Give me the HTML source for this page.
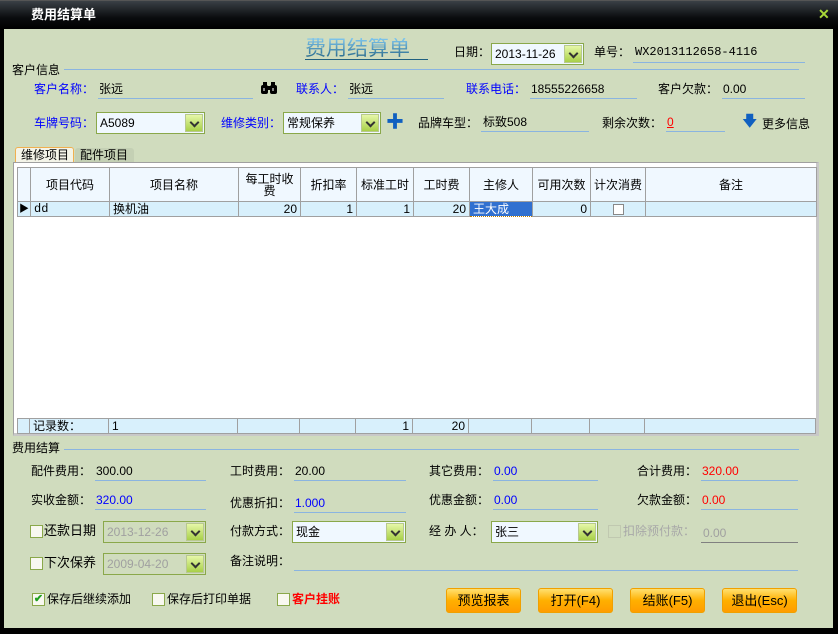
<!DOCTYPE html>
<html><head><meta charset="utf-8"><style>
*{margin:0;padding:0;box-sizing:border-box}
body{width:838px;height:634px;overflow:hidden;background:#000;font-family:"Liberation Sans","Noto Sans CJK SC",sans-serif;font-size:12px;color:#000;position:relative}
.win{position:absolute;left:4px;top:29px;width:829px;height:599px;background:#d0dcbe}
.tb{position:absolute;left:0;top:0;width:838px;height:29px;background:linear-gradient(#3a4046,#0a0c0e 60%,#000);border-top:1px solid #555}
.a{position:absolute;white-space:nowrap;line-height:14px}
.bl{color:#0000ff}
.ul{position:absolute;height:1px;background:#8ab4e0}
.sel{position:absolute;height:22px;border:1px solid #8aa84a;background:#f0f8ff;padding-left:3px;line-height:20px}
.sel i{position:absolute;right:1px;top:1px;width:18px;height:18px;background:linear-gradient(#e6f7a8,#a8d048);border:1px solid #b8c890}
.sel i:after{content:"";position:absolute;left:5px;top:4px;width:5px;height:5px;border-right:2px solid #333;border-bottom:2px solid #333;transform:rotate(45deg)}
.cb{position:absolute;width:13px;height:13px;border:1px solid #8aa84a;background:#f8f8f0}
.btn{position:absolute;top:588px;width:75px;height:25px;border:1px solid #f0a000;border-radius:3px;background:linear-gradient(#ffe070,#ffb000 50%,#ff9c00);text-align:center;line-height:23px;font-size:13px}
table{border-collapse:collapse;position:absolute;left:17px;table-layout:fixed}
td{border:1px solid #a0a0a0;padding:0 3px;overflow:hidden;white-space:nowrap}
</style></head><body>
<div class="tb"></div>
<div class="a" style="left:31px;top:8px;color:#fff;font-weight:bold;font-size:13px">费用结算单</div>
<div class="a" style="left:818px;top:7px;color:#a8d838;font-weight:bold;font-size:14px">✕</div>
<div class="win"></div>

<div class="a" style="left:305px;top:38px;font-size:21px;line-height:22px;background:linear-gradient(#80c8f0,#206080);-webkit-background-clip:text;color:transparent">费用结算单</div>
<div style="position:absolute;left:305px;top:59px;width:123px;height:1px;background:#206080"></div>
<div class="a" style="left:454px;top:45px">日期：</div>
<div class="sel" style="left:491px;top:43px;width:93px">2013-11-26<i></i></div>
<div class="a" style="left:594px;top:45px">单号：</div>
<div class="a" style="left:635px;top:45px;font-family:'Liberation Mono',monospace">WX2013112658-4116</div>
<div class="ul" style="left:633px;top:62px;width:172px"></div>

<div class="a" style="left:12px;top:63px">客户信息</div>
<div class="ul" style="left:64px;top:69px;width:735px"></div>
<div class="a bl" style="left:34px;top:82px">客户名称：</div>
<div class="a" style="left:99px;top:82px">张远</div>
<div class="ul" style="left:98px;top:98px;width:155px"></div>
<svg style="position:absolute;left:261px;top:82px" width="16" height="12" viewBox="0 0 16 12"><rect x="2" y="0" width="4" height="4" fill="#000"/><rect x="10" y="0" width="4" height="4" fill="#000"/><rect x="0" y="3" width="7" height="9" rx="2" fill="#000"/><rect x="9" y="3" width="7" height="9" rx="2" fill="#000"/><rect x="6" y="4" width="4" height="4" fill="#000"/><rect x="2" y="6" width="2" height="3" fill="#888"/><rect x="11" y="6" width="2" height="3" fill="#888"/></svg>
<div class="a bl" style="left:296px;top:82px">联系人：</div>
<div class="a" style="left:349px;top:82px">张远</div>
<div class="ul" style="left:348px;top:98px;width:96px"></div>
<div class="a bl" style="left:466px;top:82px">联系电话：</div>
<div class="a" style="left:531px;top:82px">18555226658</div>
<div class="ul" style="left:530px;top:98px;width:107px"></div>
<div class="a" style="left:658px;top:82px">客户欠款：</div>
<div class="a" style="left:723px;top:82px">0.00</div>
<div class="ul" style="left:722px;top:98px;width:83px"></div>

<div class="a bl" style="left:34px;top:116px">车牌号码：</div>
<div class="sel" style="left:96px;top:112px;width:109px">A5089<i></i></div>
<div class="a bl" style="left:221px;top:116px">维修类别：</div>
<div class="sel" style="left:283px;top:112px;width:98px">常规保养<i></i></div>
<div class="a" style="left:386px;top:112px;color:#1060c0;font-size:18px;font-weight:bold;line-height:20px">✚</div>
<div class="a" style="left:418px;top:116px">品牌车型：</div>
<div class="a" style="left:483px;top:115px">标致508</div>
<div class="ul" style="left:481px;top:131px;width:108px"></div>
<div class="a" style="left:602px;top:116px">剩余次数：</div>
<div class="a" style="left:667px;top:115px;color:red;text-decoration:underline">0</div>
<div class="ul" style="left:666px;top:131px;width:59px"></div>
<div class="a" style="left:742px;top:115px;color:#1060c0;font-size:15px">🡇</div>
<div class="a" style="left:762px;top:117px">更多信息</div>

<div class="a" style="left:15px;top:147px;width:59px;height:16px;background:#f4f4e8;border:1px solid #f0b050;border-bottom:none;border-radius:3px 3px 0 0;padding-left:5px;line-height:15px">维修项目</div>
<div class="a" style="left:75px;top:148px;width:59px;height:15px;background:#c4d0b4;border-radius:3px 3px 0 0;padding-left:5px;line-height:15px">配件项目</div>
<div style="position:absolute;left:13px;top:162px;width:806px;height:274px;border:1px solid #a0a0a0;border-right-width:3px;border-bottom-width:3px;border-color:#a0a0a0 #c8c8c8 #c8c8c8 #a0a0a0;background:#fff"></div>
<table style="top:167px">
<colgroup><col width="12"><col width="79"><col width="129"><col width="62"><col width="56"><col width="57"><col width="56"><col width="63"><col width="58"><col width="55"><col width="171"></colgroup>
<tr style="height:34px;background:#f0f8ff;text-align:center"><td></td><td>项目代码</td><td>项目名称</td><td style="line-height:12px;white-space:normal">每工时收费</td><td>折扣率</td><td>标准工时</td><td>工时费</td><td>主修人</td><td>可用次数</td><td>计次消费</td><td>备注</td></tr>
<tr style="height:15px;background:#d8f0fc;line-height:13px"><td style="padding:0 1px;font-size:10px">▶</td><td style="font-family:'Liberation Mono',monospace">dd</td><td>换机油</td><td style="text-align:right">20</td><td style="text-align:right">1</td><td style="text-align:right">1</td><td style="text-align:right">20</td><td style="background:#3070d0;color:#fff;border:1px dotted #c08000">王大成</td><td style="text-align:right">0</td><td style="text-align:center"><span style="display:inline-block;width:11px;height:11px;border:1px solid #888;background:#fff;vertical-align:middle"></span></td><td></td></tr>
</table>
<table style="top:418px">
<colgroup><col width="12"><col width="79"><col width="129"><col width="62"><col width="56"><col width="57"><col width="56"><col width="63"><col width="58"><col width="55"><col width="171"></colgroup>
<tr style="height:15px;background:#d8f0fc;line-height:13px"><td></td><td>记录数：</td><td>1</td><td></td><td></td><td style="text-align:right">1</td><td style="text-align:right">20</td><td></td><td></td><td></td><td></td></tr>
</table>

<div class="a" style="left:12px;top:441px">费用结算</div>
<div class="ul" style="left:64px;top:449px;width:735px"></div>

<div class="a" style="left:31px;top:464px">配件费用：</div><div class="a" style="left:96px;top:464px">300.00</div><div class="ul" style="left:95px;top:480px;width:111px"></div>
<div class="a" style="left:230px;top:464px">工时费用：</div><div class="a" style="left:295px;top:464px">20.00</div><div class="ul" style="left:294px;top:480px;width:112px"></div>
<div class="a" style="left:429px;top:464px">其它费用：</div><div class="a bl" style="left:494px;top:464px">0.00</div><div class="ul" style="left:493px;top:480px;width:105px"></div>
<div class="a" style="left:637px;top:464px">合计费用：</div><div class="a" style="left:702px;top:464px;color:red">320.00</div><div class="ul" style="left:701px;top:480px;width:97px"></div>

<div class="a" style="left:31px;top:493px">实收金额：</div><div class="a bl" style="left:96px;top:493px">320.00</div><div class="ul" style="left:95px;top:509px;width:111px"></div>
<div class="a" style="left:230px;top:496px">优惠折扣：</div><div class="a bl" style="left:295px;top:496px">1.000</div><div class="ul" style="left:294px;top:512px;width:112px"></div>
<div class="a" style="left:429px;top:493px">优惠金额：</div><div class="a bl" style="left:494px;top:493px">0.00</div><div class="ul" style="left:493px;top:509px;width:105px"></div>
<div class="a" style="left:637px;top:493px">欠款金额：</div><div class="a" style="left:702px;top:493px;color:red">0.00</div><div class="ul" style="left:701px;top:509px;width:97px"></div>

<div class="cb" style="left:30px;top:525px"></div><div class="a" style="left:44px;top:524px;font-size:13px">还款日期</div>
<div class="sel" style="left:103px;top:521px;width:103px;color:#a0a0a0;background:#d0dcbe">2013-12-26<i></i></div>
<div class="a" style="left:230px;top:524px">付款方式：</div>
<div class="sel" style="left:292px;top:521px;width:114px">现金<i></i></div>
<div class="a" style="left:429px;top:524px">经 办 人：</div>
<div class="sel" style="left:491px;top:521px;width:107px">张三<i></i></div>
<div class="cb" style="left:608px;top:525px;border-color:#c0c8b0;background:transparent"></div><div class="a" style="left:623px;top:524px;color:#a8a8a8">扣除预付款：</div>
<div class="a" style="left:703px;top:526px;color:#a0a0a0">0.00</div><div class="ul" style="left:701px;top:542px;width:97px;background:#808080"></div>

<div class="cb" style="left:30px;top:557px"></div><div class="a" style="left:44px;top:556px;font-size:13px">下次保养</div>
<div class="sel" style="left:103px;top:553px;width:103px;color:#a0a0a0;background:#d0dcbe">2009-04-20<i></i></div>
<div class="a" style="left:230px;top:554px">备注说明：</div>
<div class="ul" style="left:294px;top:570px;width:504px"></div>

<div class="cb" style="left:32px;top:593px;color:#20a020;font-size:11px;line-height:11px;text-align:center;font-weight:bold">✔</div><div class="a" style="left:47px;top:592px">保存后继续添加</div>
<div class="cb" style="left:152px;top:593px"></div><div class="a" style="left:167px;top:592px">保存后打印单据</div>
<div class="cb" style="left:277px;top:593px"></div><div class="a" style="left:292px;top:592px;color:red;font-weight:bold">客户挂账</div>

<div class="btn" style="left:446px">预览报表</div>
<div class="btn" style="left:538px">打开(F4)</div>
<div class="btn" style="left:630px">结账(F5)</div>
<div class="btn" style="left:722px">退出(Esc)</div>
</body></html>
